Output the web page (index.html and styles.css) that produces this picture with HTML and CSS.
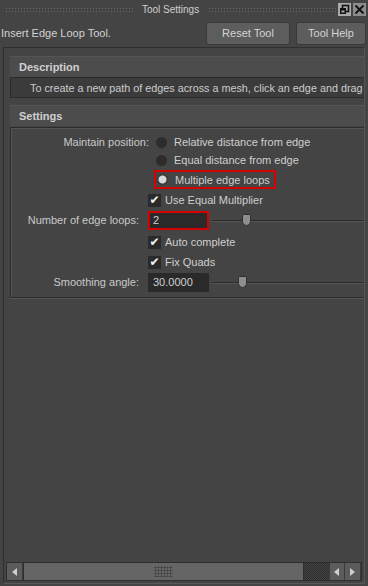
FILE: index.html
```html
<!DOCTYPE html>
<html lang="en">
  <head>
    <meta charset="UTF-8" />
    <meta name="viewport" content="width=device-width, initial-scale=1.0" />
    <title>Tool Settings</title>
    <link rel="stylesheet" href="styles.css">
  </head>
  <body>
    <div class="titlebar">
      <span class="grip"></span>
      <span class="title">Tool Settings</span>
      <span class="grip"></span>
      <span class="winbtn light">
        <svg width="11" height="11" viewBox="0 0 11 11">
          <rect x="3.5" y="1.5" width="6" height="6" fill="none" stroke="#111" stroke-width="1.6" />
          <rect x="1" y="4" width="6" height="6" fill="#111" />
          <rect x="2.5" y="6.5" width="3" height="2" fill="#aaa" />
        </svg>
      </span>
      <span class="winbtn">
        <svg width="11" height="11" viewBox="0 0 11 11">
          <path d="M1.5 1.5 L9.5 9.5 M9.5 1.5 L1.5 9.5" stroke="#111" stroke-width="1.8" />
        </svg>
      </span>
    </div>

    <div class="toolbar">
      <span class="toolname">Insert Edge Loop Tool.</span>
      <button class="btn reset">Reset Tool</button>
      <button class="btn help">Tool Help</button>
    </div>

    <div class="scroll">
      <div class="view">
        <div class="content">
          <div class="frame-head">Description</div>
          <div class="desc">To create a new path of edges across a mesh, click an edge and drag</div>

          <div class="frame-head settings-head">Settings</div>
          <div class="frame-body">
            <div class="row">
              <span class="label wide">Maintain position:</span>
              <span class="radio"></span>
              <span class="opt">Relative distance from edge</span>
            </div>
            <div class="row">
              <span class="label wide"></span>
              <span class="radio"></span>
              <span class="opt">Equal distance from edge</span>
            </div>
            <div class="row tall">
              <span class="label wide"></span>
              <span class="marked">
                <span class="radio on"></span>
                <span class="opt">Multiple edge loops</span>
              </span>
            </div>
            <div class="row check-row first">
              <span class="label"></span>
              <span class="check">&#10004;</span>
              <span class="opt">Use Equal Multiplier</span>
            </div>
            <div class="row field-row">
              <span class="label">Number of edge loops:</span>
              <span class="field marked-field">2</span>
              <span class="slider"><span class="thumb" style="left: 30px"></span></span>
            </div>
            <div class="row check-row after-field">
              <span class="label"></span>
              <span class="check">&#10004;</span>
              <span class="opt">Auto complete</span>
            </div>
            <div class="row check-row">
              <span class="label"></span>
              <span class="check">&#10004;</span>
              <span class="opt">Fix Quads</span>
            </div>
            <div class="row field-row">
              <span class="label">Smoothing angle:</span>
              <span class="field">30.0000</span>
              <span class="slider"><span class="thumb" style="left: 26px"></span></span>
            </div>
          </div>
        </div>
      </div>

      <div class="hscroll">
        <span class="sbtn"><span class="arrow-left"></span></span>
        <span class="sthumb"><span class="dots"></span></span>
        <span class="strack"></span>
        <span class="sbtn"><span class="arrow-left"></span></span>
        <span class="sbtn"><span class="arrow-right"></span></span>
      </div>
    </div>
  </body>
</html>
```

FILE: styles.css
```css
body {
  margin: 0;
  padding: 0;
  width: 368px;
  height: 586px;
  overflow: hidden;
  background-color: #444444;
  color: #c9c9c9;
  font-family: "Liberation Sans", Arial, sans-serif;
  font-size: 11px;
}

/* title bar */
.titlebar {
  display: flex;
  align-items: center;
  height: 19px;
  padding: 0 2px 0 5px;
  box-sizing: border-box;
}
.grip {
  flex: 1;
  height: 6px;
  background-image: radial-gradient(#6a6a6a 0.8px, transparent 1px);
  background-size: 3px 3px;
}
.title {
  padding: 0 9px;
  font-size: 10px;
  color: #cfcfcf;
}
.winbtn {
  width: 13px;
  height: 13px;
  margin-left: 2px;
  background-color: #8c8c8c;
  display: flex;
  align-items: center;
  justify-content: center;
}
.winbtn.light {
  background-color: #a9a9a9;
}

/* tool row */
.toolbar {
  display: flex;
  align-items: center;
  height: 28px;
  padding: 0 2px 0 1px;
}
.toolname {
  flex: 1;
  color: #d2d2d2;
}
.btn {
  height: 23px;
  border: 1px solid #3a3a3a;
  border-radius: 3px;
  background-color: #5d5d5d;
  color: #d4d4d4;
  font-family: inherit;
  font-size: 11px;
  padding: 0;
}
.reset {
  width: 84px;
  margin-right: 6px;
}
.help {
  width: 70px;
}

/* scroll area */
.scroll {
  margin: 0 3px 0 3px;
  height: 537px;
  border: 1px solid #2f2f2f;
  border-bottom-color: #5a5a5a;
  border-right-color: #555;
  box-sizing: border-box;
  display: flex;
  flex-direction: column;
}
.view {
  flex: 1;
  overflow: hidden;
  padding: 8px 0 0 6px;
}
.content {
  width: 440px;
}
.frame-head {
  height: 21px;
  line-height: 21px;
  padding-left: 9px;
  background-color: #4c4c4c;
  border-top: 1px solid #555;
  box-sizing: border-box;
  font-weight: bold;
  color: #d0d0d0;
}
.desc {
  height: 21px;
  line-height: 20px;
  padding-left: 19px;
  background-color: #3b3b3b;
  border: 1px solid #2a2a2a;
  box-sizing: border-box;
  white-space: nowrap;
  font-size: 10.8px;
  color: #cccccc;
}
.settings-head {
  margin-top: 7px;
}
.frame-body {
  margin-top: 1px;
  height: 171px;
  border: 1px solid #2c2c2c;
  box-shadow: inset 1px 1px 0 #555, 0 1px 0 #555;
  box-sizing: border-box;
  padding-top: 5px;
}

/* rows */
.row {
  display: flex;
  align-items: center;
  height: 18px;
}
.row.tall {
  height: 21px;
}
.field-row {
  height: 20px;
  margin-top: 1px;
}
.check-row {
  margin-top: 2px;
}
.check-row.first {
  margin-top: 1px;
}
.check-row.after-field {
  margin-top: 3px;
}
.label {
  width: 128px;
  text-align: right;
  padding-right: 9px;
  flex-shrink: 0;
  color: #c9c9c9;
}
.label.wide {
  width: 138px;
  padding-right: 7px;
}
.radio {
  width: 11px;
  height: 11px;
  border-radius: 50%;
  background-color: #2c2c2c;
  margin-right: 7px;
}
.radio.on {
  background: radial-gradient(circle, #d8d8d8 0 3.5px, #3a3a3a 4.5px);
}
.opt {
  color: #cfcfcf;
}
.marked {
  display: flex;
  align-items: center;
  margin-left: -2px;
  padding: 0 4px 0 1px;
  height: 19px;
  border: 2px solid #d50000;
  box-sizing: border-box;
}
.check {
  width: 13px;
  height: 13px;
  background-color: #2a2a2a;
  color: #f2f2f2;
  font-size: 12px;
  line-height: 13px;
  text-align: center;
  margin-right: 4px;
  font-family: "DejaVu Sans", sans-serif;
}
.field {
  width: 61px;
  height: 19px;
  line-height: 19px;
  padding-left: 5px;
  box-sizing: border-box;
  background-color: #2a2a2a;
  color: #d0d0d0;
}
.marked-field {
  border: 2px solid #d50000;
  line-height: 15px;
  padding-left: 3px;
}
.slider {
  position: relative;
  flex: 1;
  height: 1px;
  margin-left: 3px;
  background-color: #2a2a2a;
  box-shadow: 0 1px 0 #555;
}
.thumb {
  position: absolute;
  top: -6px;
  width: 9px;
  height: 12px;
  background-color: #8e8e8e;
  border: 1px solid #2f2f2f;
  border-radius: 2px 2px 5px 5px;
  box-sizing: border-box;
}

/* horizontal scrollbar */
.hscroll {
  display: flex;
  height: 17px;
  margin: 0 2px 2px 2px;
  border: 1px solid #2e2e2e;
  background-color: #3c3c3c;
}
.sbtn {
  width: 15px;
  background-color: #5c5c5c;
  border-right: 1px solid #3a3a3a;
  display: flex;
  align-items: center;
  justify-content: center;
}
.arrow-left {
  width: 0;
  height: 0;
  border-top: 4px solid transparent;
  border-bottom: 4px solid transparent;
  border-right: 5px solid #cfcfcf;
}
.arrow-right {
  width: 0;
  height: 0;
  border-top: 4px solid transparent;
  border-bottom: 4px solid transparent;
  border-left: 5px solid #cfcfcf;
}
.sthumb {
  width: 284px;
  background-color: #656565;
  border-left: 1px solid #2e2e2e;
  border-right: 1px solid #2e2e2e;
  display: flex;
  align-items: center;
  justify-content: center;
}
.dots {
  width: 19px;
  height: 11px;
  background-image: radial-gradient(#3c3c3c 0.9px, transparent 1.1px);
  background-size: 3px 3px;
}
.strack {
  width: 26px;
  background-image: repeating-conic-gradient(#2e2e2e 0 25%, #444 0 50%);
  background-size: 2px 2px;
}
```
